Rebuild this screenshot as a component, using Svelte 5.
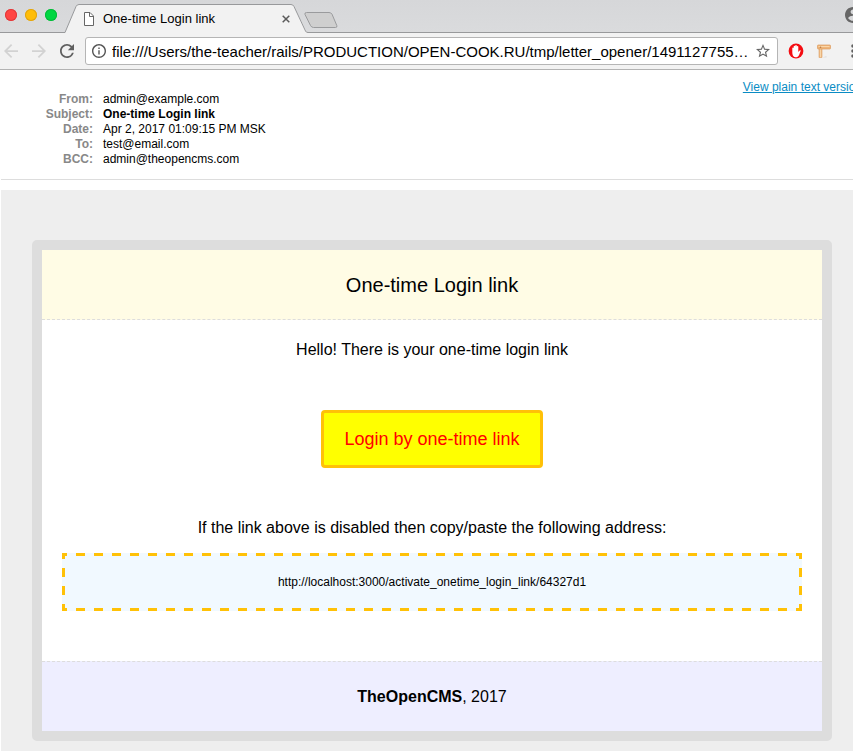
<script>
  const address =
    'file:///Users/the-teacher/rails/PRODUCTION/OPEN-COOK.RU/tmp/letter_opener/1491127755…';

  const headers = [
    { label: 'From:', value: 'admin@example.com' },
    { label: 'Subject:', value: 'One-time Login link', strong: true },
    { label: 'Date:', value: 'Apr 2, 2017 01:09:15 PM MSK' },
    { label: 'To:', value: 'test@email.com' },
    { label: 'BCC:', value: 'admin@theopencms.com' }
  ];
</script>

<div class="screen">
  <div class="window">
    <header class="tabstrip">
      <div class="lights">
        <button class="light red" aria-label="Close window"></button>
        <button class="light amber" aria-label="Minimise window"></button>
        <button class="light green" aria-label="Zoom window"></button>
      </div>
      <div class="tab">
        <svg class="tab-shape" viewBox="0 0 244 29" aria-hidden="true">
          <path d="M0 29 L1 28.5 L12 2.5 Q13 .5 15 .5 H227 Q229 .5 230 2.5 L242 27 Q243 28.5 244 28.5 V29 Z" fill="#f2f2f2" />
          <path d="M0 28.5 H1 L12 2.5 Q13 .5 15 .5 H227 Q229 .5 230 2.5 L241.500 27 Q242 28.500 244 28.500" fill="none" stroke="#98999b" />
        </svg>
        <svg class="page-icon" width="10" height="14" viewBox="0 0 10 14" aria-hidden="true">
          <path d="M.5 .5 H6 L9.500 4 V13.500 H.5 Z" fill="#fff" stroke="#666" />
          <path d="M5.500 .5 V4.500 H9.500" fill="none" stroke="#666" />
        </svg>
        <span class="tab-title">One-time Login link</span>
        <button class="tab-close" aria-label="Close tab">
          <svg width="8" height="8" viewBox="0 0 8 8"><path d="M.7 .7 L7.300 7.300 M7.300 .7 L.7 7.300" stroke="#5a5a5a" stroke-width="1.500" /></svg>
        </button>
      </div>
      <button class="new-tab" aria-label="New tab">
        <svg width="34" height="17" viewBox="0 0 34 17">
          <path d="M2.500 .5 H25 Q27 .5 28 2.200 L32.800 13.500 Q33.500 15.500 31.500 15.500 H9.500 Q7.500 15.500 6.500 13.500 L1 2.500 Q.4 .5 2.500 .5 Z" fill="#cfcfcf" stroke="#9a9b9d" />
        </svg>
      </button>
      <button class="profile" aria-label="Profile">
        <svg width="16" height="16" viewBox="2 2 20 20">
          <path fill="#666" d="M12 2C6.480 2 2 6.480 2 12s4.480 10 10 10 10-4.480 10-10S17.520 2 12 2zm0 3c1.660 0 3 1.340 3 3s-1.340 3-3 3-3-1.340-3-3 1.340-3 3-3zm0 14.200c-2.500 0-4.710-1.280-6-3.220.030-1.990 4-3.080 6-3.080 1.990 0 5.970 1.090 6 3.080-1.290 1.940-3.500 3.220-6 3.220z" />
        </svg>
      </button>
    </header>

    <nav class="toolbar" aria-label="Browser toolbar">
      <button class="nav off" aria-label="Back">
        <svg width="14" height="14" viewBox="4 4 16 16"><path d="M20 11H7.830l5.590-5.590L12 4l-8 8 8 8 1.410-1.410L7.830 13H20v-2z" /></svg>
      </button>
      <button class="nav off" aria-label="Forward">
        <svg width="14" height="14" viewBox="4 4 16 16"><path d="M12 4l-1.410 1.410L16.170 11H4v2h12.170l-5.580 5.590L12 20l8-8z" /></svg>
      </button>
      <button class="nav" aria-label="Reload">
        <svg width="14" height="14" viewBox="4 4 16 16"><path d="M17.650 6.350A7.958 7.958 0 0 0 12 4c-4.420 0-7.990 3.580-7.990 8s3.570 8 7.990 8c3.730 0 6.840-2.550 7.730-6h-2.080A5.990 5.990 0 0 1 12 18c-3.310 0-6-2.690-6-6s2.690-6 6-6c1.660 0 3.140.690 4.220 1.780L13 11h7V4l-2.350 2.350z" /></svg>
      </button>
      <div class="omnibox">
        <svg width="14" height="14" viewBox="2 2 20 20" aria-hidden="true"><path fill="#555" d="M11 17h2v-6h-2v6zm1-15C6.480 2 2 6.480 2 12s4.480 10 10 10 10-4.480 10-10S17.520 2 12 2zm0 18c-4.410 0-8-3.590-8-8s3.590-8 8-8 8 3.590 8 8-3.590 8-8 8zM11 9h2V7h-2v2z" /></svg>
        <input type="text" aria-label="Address" value={address} />
        <button class="star" aria-label="Bookmark this page">
          <svg width="14" height="14" viewBox="2 2 20 20"><path fill="#666" d="M22 9.240l-7.190-.620L12 2 9.190 8.630 2 9.240l5.460 4.730L5.820 21 12 17.270 18.180 21l-1.630-7.030L22 9.240zM12 15.400l-3.760 2.270 1-4.280-3.320-2.880 4.380-.380L12 6.100l1.710 4.040 4.380.380-3.320 2.880 1 4.280L12 15.400z" /></svg>
        </button>
      </div>
      <button class="ext" aria-label="Ad blocker">
        <svg width="16" height="16" viewBox="0 0 16 16">
          <circle cx="8" cy="8" r="7.400" fill="#f40d12" />
          <path fill="#fff" d="M4.300 5.200q0-.8.700-.8t.7.800V3.600q0-.8.700-.8t.8.800V2.900q0-.8.800-.8t.8.800v.8q0-.8.700-.8t.8.800v5.300l1.300-1.500q.7-.6 1.200 0l-1.700 4.500q-.7 2-2.500 2.200H7.300q-1.600-.1-2.400-1.700-.6-1.400-.6-3z" />
        </svg>
      </button>
      <button class="ext" aria-label="Carpentry extension">
        <svg width="16" height="16" viewBox="0 0 16 16">
          <path d="M3 5.500h3v9H3z" fill="#eebb85" stroke="#dba26a" stroke-width=".6" />
          <path d="M4.500 6v8" stroke="#f8d6aa" />
          <rect x="1.500" y="2" width="13" height="4" rx=".7" fill="#efb57a" stroke="#dc9c60" stroke-width=".7" />
          <path d="M2.500 3.500h11" stroke="#fbd7a9" />
          <circle cx="4.500" cy="4.200" r=".8" fill="#b87840" />
          <path d="M6.500 14.500l4-1.500v1.500z" fill="#ddd" />
        </svg>
      </button>
      <button class="ext menu" aria-label="Menu">
        <svg width="4" height="14" viewBox="0 0 4 14" fill="#5f5f5f"><circle cx="2" cy="2" r="1.800" /><circle cx="2" cy="7" r="1.800" /><circle cx="2" cy="12" r="1.800" /></svg>
      </button>
    </nav>

    <main>
      <section class="message-headers">
        <dl>
          {#each headers as row}
            <dt>{row.label}</dt>
            <dd class:strong={row.strong}>{row.value}</dd>
          {/each}
        </dl>
        <a class="plain" href="#plain">View plain text version</a>
      </section>

      <div class="letter">
        <article class="card">
          <h1>One-time Login link</h1>
          <div class="content">
            <p>Hello! There is your one-time login link</p>
            <a class="login" href="#login">Login by one-time link</a>
            <p>If the link above is disabled then copy/paste the following address:</p>
            <div class="link-box">http://localhost:3000/activate_onetime_login_link/64327d1</div>
          </div>
          <footer><strong>TheOpenCMS</strong>, 2017</footer>
        </article>
      </div>
    </main>
  </div>
</div>

<style>
  :global(body) {
    margin: 0;
    background: #fff;
  }
  .screen {
    overflow: hidden;
    font-family: 'Liberation Sans', Arial, Helvetica, sans-serif;
    color: #000;
  }
  /* The window runs slightly past the right edge of the viewport. */
  .window {
    display: flex;
    flex-direction: column;
    width: calc(100% + 10px);
    min-height: 100vh;
  }
  button {
    display: flex;
    align-items: center;
    justify-content: center;
    margin: 0;
    padding: 0;
    border: 0;
    background: none;
    flex: none;
  }
  svg {
    display: block;
    flex: none;
  }

  .tabstrip {
    display: flex;
    height: 33px;
    box-sizing: border-box;
    background: linear-gradient(#d6d7d9, #dadbdd);
    box-shadow: inset 0 -1px #98999b;
  }
  .lights {
    display: flex;
    gap: 8px;
    padding: 9px 7px 0 5px;
  }
  .light {
    width: 12px;
    height: 12px;
    border-radius: 50%;
  }
  .red {
    background: #ff4543;
    box-shadow: inset 0 0 0 1px #e0393a;
  }
  .amber {
    background: #ffbd08;
    box-shadow: inset 0 0 0 1px #e0a310;
  }
  .green {
    background: #00d742;
    box-shadow: inset 0 0 0 1px #05b93a;
  }
  .tab {
    position: relative;
    display: flex;
    align-items: center;
    width: 244px;
    height: 29px;
    margin-top: 4px;
    padding: 0 18px 0 20px;
    box-sizing: border-box;
  }
  .tab-shape {
    position: absolute;
    inset: 0;
    width: 100%;
    height: 100%;
  }
  .page-icon,
  .tab-title,
  .tab-close {
    position: relative;
  }
  .tab-title {
    flex: 1;
    padding-left: 9px;
    font-size: 13px;
  }
  .new-tab {
    align-self: flex-start;
    margin: 12px 0 0 -4px;
  }
  .profile {
    align-self: flex-start;
    margin: 7px 2px 0 auto;
  }

  .toolbar {
    display: flex;
    align-items: center;
    height: 37px;
    padding: 0 8px 0 4px;
    box-sizing: border-box;
    background: #f2f2f2;
    border-bottom: 1px solid #b3b3b3;
  }
  .nav {
    margin-right: 14px;
  }
  .nav svg {
    fill: #5f5f5f;
  }
  .nav.off svg {
    fill: #d2d2d2;
  }
  .nav:nth-child(3) {
    margin-right: 11px;
  }
  .omnibox {
    display: flex;
    flex: 1;
    align-items: center;
    height: 28px;
    padding: 0 7px 0 6px;
    box-sizing: border-box;
    background: #fff;
    border: 1px solid #b5b5b5;
    border-radius: 3px;
  }
  .omnibox input {
    flex: 1;
    min-width: 0;
    height: 24px;
    padding: 0 0 0 6px;
    border: 0;
    outline: 0;
    background: none;
    font: 15px 'Liberation Sans', Arial, sans-serif;
    color: #000;
    text-overflow: ellipsis;
  }
  .ext {
    margin-left: 12px;
  }
  .omnibox + .ext {
    margin-left: 10px;
  }
  .menu {
    margin-left: 19px;
  }

  main {
    display: flex;
    flex: 1;
    flex-direction: column;
    padding-left: 1px;
  }
  .message-headers {
    display: flex;
    align-items: flex-start;
    justify-content: space-between;
    height: 110px;
    padding: 0 1px;
    box-sizing: border-box;
    border-bottom: 1px solid #ddd;
    font-size: 12px;
    line-height: 15px;
  }
  dl {
    display: grid;
    grid-template-columns: 91px auto;
    column-gap: 10px;
    margin: 22px 0 0;
  }
  dt {
    text-align: right;
    font-weight: bold;
    color: #888;
  }
  dd {
    margin: 0;
  }
  .strong {
    font-weight: bold;
  }
  .plain {
    margin-top: 10px;
    color: #0a8cc4;
  }

  .letter {
    flex: 1;
    margin-top: 10px;
    padding: 50px 31px 10px;
    background: #eee;
  }
  .card {
    max-width: 780px;
    margin: 0 auto;
    border: 10px solid #ddd;
    border-radius: 5px;
    background: #fff;
    text-align: center;
  }
  h1 {
    margin: 0;
    padding: 21px 20px 19px;
    border-bottom: 1px dashed #ddd;
    background: #fffce5;
    font-size: 20px;
    font-weight: normal;
    line-height: 29px;
  }
  .content {
    padding: 20px 20px 50px;
    font-size: 16px;
    line-height: 20px;
  }
  p {
    margin: 0;
  }
  .login {
    display: inline-block;
    margin: 50px 0;
    padding: 16px 20px;
    border: 3px solid #ffc107;
    border-radius: 4px;
    background: #ff0;
    color: #f00;
    font-size: 18px;
    text-decoration: none;
    vertical-align: top;
  }
  .link-box {
    --gold-x: linear-gradient(90deg, #ffc107 9px, transparent 9px);
    --gold-y: linear-gradient(#ffc107 9px, transparent 9px);
    margin-top: 15px;
    padding: 19px 20px;
    font-size: 12px;
    background:
      var(--gold-x) -4px 0 / 18px 3px repeat-x,
      var(--gold-x) -4px 100% / 18px 3px repeat-x,
      var(--gold-y) 0 -3px / 3px 18px repeat-y,
      var(--gold-y) 100% -3px / 3px 18px repeat-y,
      #f1f9ff;
  }
  footer {
    padding: 25px 20px 24px;
    border-top: 1px dashed #ddd;
    background: #eef;
    font-size: 16px;
    line-height: 20px;
  }
</style>
